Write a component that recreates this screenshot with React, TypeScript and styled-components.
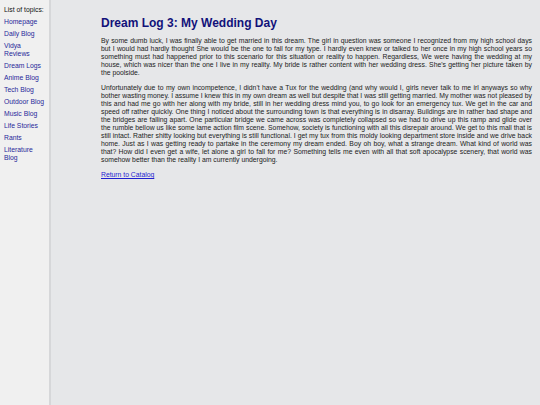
import { createGlobalStyle, styled } from 'styled-components';

const GlobalStyle = createGlobalStyle`
  html, body {
    margin: 0;
    padding: 0;
    height: 100%;
  }
  body {
    font-family: "Liberation Sans", Arial, sans-serif;
    background: #e6e7e9;
  }
  #root {
    height: 100%;
  }
`;

const topics = [
  'Homepage',
  'Daily Blog',
  'Vidya Reviews',
  'Dream Logs',
  'Anime Blog',
  'Tech Blog',
  'Outdoor Blog',
  'Music Blog',
  'Life Stories',
  'Rants',
  'Literature Blog',
];

const paragraphs = [
  "By some dumb luck, I was finally able to get married in this dream. The girl in question was someone I recognized from my high school days but I would had hardly thought She would be the one to fall for my type. I hardly even knew or talked to her once in my high school years so something must had happened prior to this scenario for this situation or reality to happen. Regardless, We were having the wedding at my house, which was nicer than the one I live in my reality. My bride is rather content with her wedding dress. She's getting her picture taken by the poolside.",
  "Unfortunately due to my own incompetence, I didn't have a Tux for the wedding (and why would I, girls never talk to me irl anyways so why bother wasting money. I assume I knew this in my own dream as well but despite that I was still getting married. My mother was not pleased by this and had me go with her along with my bride, still in her wedding dress mind you, to go look for an emergency tux. We get in the car and speed off rather quickly. One thing I noticed about the surrounding town is that everything is in disarray. Buildings are in rather bad shape and the bridges are falling apart. One particular bridge we came across was completely collapsed so we had to drive up this ramp and glide over the rumble bellow us like some lame action film scene. Somehow, society is functioning with all this disrepair around. We get to this mall that is still intact. Rather shitty looking but everything is still functional. I get my tux from this moldy looking department store inside and we drive back home. Just as I was getting ready to partake in the ceremony my dream ended. Boy oh boy, what a strange dream. What kind of world was that? How did I even get a wife, let alone a girl to fall for me? Something tells me even with all that soft apocalypse scenery, that world was somehow better than the reality I am currently undergoing.",
];

const App = () => {
  return (
    <>
      <GlobalStyle />
      <SPage>
        <SSidebar>
          <SSidebarTitle>List of topics:</SSidebarTitle>
          <STopicList>
            {topics.map(topic => (
              <li key={topic}>
                <STopicLink href="#">{topic}</STopicLink>
              </li>
            ))}
          </STopicList>
        </SSidebar>
        <SMain>
          <STitle>Dream Log 3: My Wedding Day</STitle>
          {paragraphs.map((text, i) => (
            <SParagraph key={i}>{text}</SParagraph>
          ))}
          <SLinkLine>
            <SReturnLink href="#">Return to Catalog</SReturnLink>
          </SLinkLine>
        </SMain>
      </SPage>
    </>
  );
};

const SPage = styled.div`
  display: flex;
  height: 100%;
  min-height: 405px;
`;

const SSidebar = styled.nav`
  flex-shrink: 0;
  width: 42px;
  padding: 6px 3px 0 4px;
  background: #f0f0f0;
  border-right: 2px solid #d6d7d9;
`;

const SSidebarTitle = styled.div`
  font-size: 6.8px;
  line-height: 8px;
  color: #111;
`;

const STopicList = styled.ul`
  list-style: none;
  margin: 4px 0 0;
  padding: 0;
  display: flex;
  flex-direction: column;
  gap: 4px;
  font-size: 6.8px;
  line-height: 8px;
`;

const STopicLink = styled.a`
  color: #28289a;
  text-decoration: none;
`;

const SMain = styled.main`
  flex: 1;
  padding: 16px 8px 0 50px;
`;

const STitle = styled.h1`
  margin: 0 0 7px;
  font-size: 12px;
  line-height: 14px;
  font-weight: bold;
  color: #12127a;
`;

const SParagraph = styled.p`
  margin: 0 0 7px;
  font-size: 6.84px;
  line-height: 8px;
  color: #222;
  text-align: justify;
`;

const SLinkLine = styled.p`
  margin: 0;
  font-size: 6.8px;
  line-height: 8px;
`;

const SReturnLink = styled.a`
  color: #1f1fd0;
  text-decoration: underline;
`;

export default App;
